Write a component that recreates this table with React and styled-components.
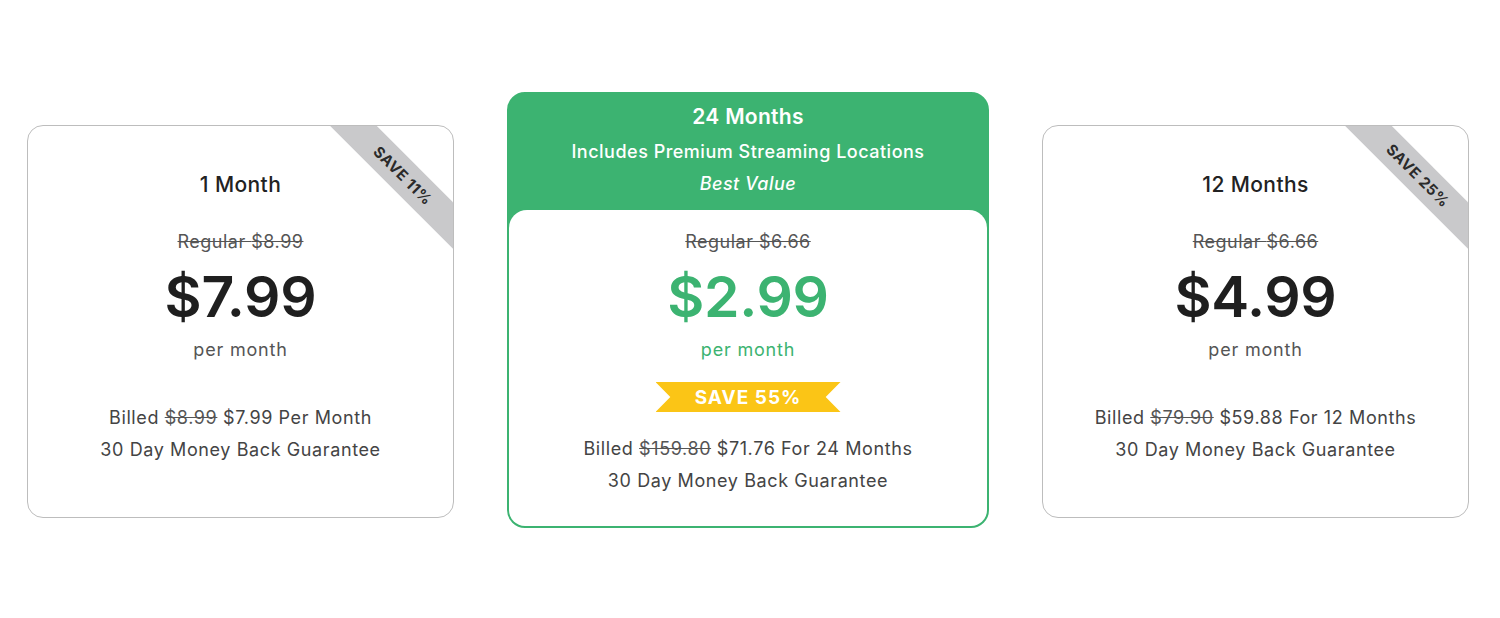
import React from "react";
import styled, { createGlobalStyle } from "styled-components";

const GlobalStyle = createGlobalStyle`
  * {
    margin: 0;
    padding: 0;
    box-sizing: border-box;
  }

  body {
    font-family: "Inter", "Noto Sans", sans-serif;
    background-color: #fff;
    color: #222;
  }
`;

const Page = styled.div`
  width: 1500px;
  height: 618px;
  display: flex;
  align-items: flex-start;
  gap: 53px;
  padding: 92px 0 0 27px;
`;

const SideCard = styled.div`
  position: relative;
  overflow: hidden;
  width: 427px;
  height: 393px;
  margin-top: 33px;
  border: 1.5px solid #bdbdbd;
  border-radius: 16px;
  display: flex;
  flex-direction: column;
  align-items: center;
  padding-top: 47px;
`;

const Corner = styled.div`
  position: absolute;
  top: 33px;
  right: -50px;
  width: 200px;
  height: 33px;
  background-color: #c9c9cb;
  transform: rotate(45deg);
  display: flex;
  align-items: center;
  justify-content: center;
  font-size: 15px;
  font-weight: 700;
  letter-spacing: 0.5px;
  color: #2a2a2a;
`;

const Title = styled.h3`
  font-size: 21px;
  line-height: 24px;
  font-weight: 500;
  letter-spacing: 0.4px;
  color: #222;
`;

const Regular = styled.p`
  font-size: 18px;
  line-height: 22px;
  letter-spacing: 0.5px;
  color: #555;
  text-decoration: line-through;
  margin-top: ${(p) => p.$gap}px;
`;

const Price = styled.div`
  font-size: 57px;
  line-height: 60px;
  font-weight: 600;
  letter-spacing: -0.3px;
  color: ${(p) => (p.$green ? "#3cb371" : "#1f1f1f")};
  margin-top: 14px;
`;

const PerMonth = styled.p`
  font-size: 18px;
  line-height: 22px;
  letter-spacing: 0.8px;
  color: ${(p) => (p.$green ? "#3cb371" : "#555")};
  margin-top: 12px;
`;

const Billing = styled.div`
  margin-top: ${(p) => p.$gap}px;
  font-size: 18px;
  line-height: 32px;
  letter-spacing: 0.6px;
  color: #444;
  text-align: center;

  s {
    color: #555;
  }
`;

const MainCard = styled.div`
  width: 482px;
  height: 436px;
  border: 2px solid #3cb371;
  border-radius: 18px;
  background-color: #3cb371;
  overflow: hidden;
  display: flex;
  flex-direction: column;
`;

const MainHeader = styled.div`
  display: flex;
  flex-direction: column;
  align-items: center;
  color: #fff;
  padding: 10px 0 16px;
`;

const HeaderTitle = styled.h3`
  font-size: 21px;
  line-height: 26px;
  font-weight: 600;
  letter-spacing: 0.3px;
`;

const HeaderLine = styled.p`
  font-size: 18px;
  line-height: ${(p) => p.$lh}px;
  font-weight: 500;
  letter-spacing: 0.5px;
  font-style: ${(p) => (p.$italic ? "italic" : "normal")};
`;

const MainBody = styled.div`
  flex: 1;
  background-color: #fff;
  border-radius: 18px 18px 0 0;
  display: flex;
  flex-direction: column;
  align-items: center;
  padding-top: 21px;
`;

const SaveBanner = styled.div`
  margin-top: 21px;
  width: 185px;
  height: 30px;
  background-color: #fbc516;
  clip-path: polygon(0 0, 100% 0, 92% 50%, 100% 100%, 0 100%, 8% 50%);
  display: flex;
  align-items: center;
  justify-content: center;
  color: #fff;
  font-size: 19px;
  font-weight: 700;
  letter-spacing: 1px;
`;

const plans = [
  {
    title: "1 Month",
    save: "SAVE 11%",
    regular: "$8.99",
    price: "$7.99",
    billedOld: "$8.99",
    billedNew: "$7.99 Per Month",
  },
  {
    title: "12 Months",
    save: "SAVE 25%",
    regular: "$6.66",
    price: "$4.99",
    billedOld: "$79.90",
    billedNew: "$59.88 For 12 Months",
  },
];

function Side({ plan }) {
  return (
    <SideCard>
      <Corner>{plan.save}</Corner>
      <Title>{plan.title}</Title>
      <Regular $gap={34}>Regular {plan.regular}</Regular>
      <Price>{plan.price}</Price>
      <PerMonth>per month</PerMonth>
      <Billing $gap={41}>
        <div>
          Billed <s>{plan.billedOld}</s> {plan.billedNew}
        </div>
        <div>30 Day Money Back Guarantee</div>
      </Billing>
    </SideCard>
  );
}

export default function App() {
  return (
    <>
      <GlobalStyle />
      <Page>
        <Side plan={plans[0]} />
        <MainCard>
          <MainHeader>
            <HeaderTitle>24 Months</HeaderTitle>
            <HeaderLine $lh={44}>Includes Premium Streaming Locations</HeaderLine>
            <HeaderLine $lh={20} $italic>
              Best Value
            </HeaderLine>
          </MainHeader>
          <MainBody>
            <Regular $gap={0}>Regular $6.66</Regular>
            <Price $green>$2.99</Price>
            <PerMonth $green>per month</PerMonth>
            <SaveBanner>SAVE 55%</SaveBanner>
            <Billing $gap={21}>
              <div>
                Billed <s>$159.80</s> $71.76 For 24 Months
              </div>
              <div>30 Day Money Back Guarantee</div>
            </Billing>
          </MainBody>
        </MainCard>
        <Side plan={plans[1]} />
      </Page>
    </>
  );
}
